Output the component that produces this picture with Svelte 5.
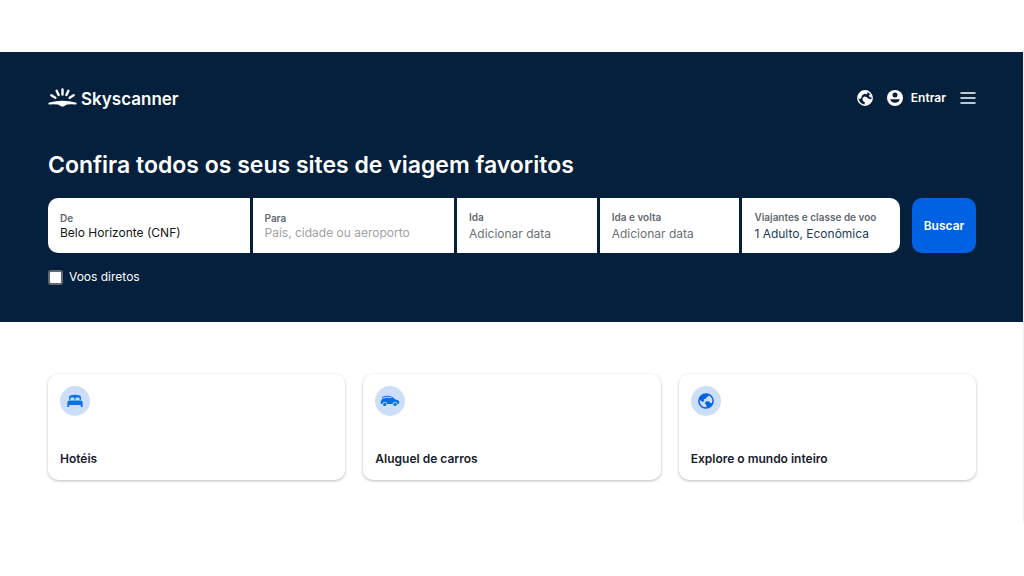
<script>
  let origin = $state('Belo Horizonte (CNF)');
  let destination = $state('');
  let direct = $state(false);

  const choices = [
    { label: 'Ida', value: 'Adicionar data' },
    { label: 'Ida e volta', value: 'Adicionar data' },
    { label: 'Viajantes e classe de voo', value: '1 Adulto, Econômica', filled: true },
  ];
  const cards = [
    { title: 'Hotéis', icon: 'bed' },
    { title: 'Aluguel de carros', icon: 'car' },
    { title: 'Explore o mundo inteiro', icon: 'globe' },
  ];
</script>

<div class="page">
  <header class="hero">
    <nav class="topbar">
      <a class="logo" href="#home">
        <svg width="29" height="22" viewBox="0 0 29 22" aria-hidden="true">
          <g stroke="#fff" stroke-width="2.400" stroke-linecap="round">
            <path d="M14.500 1.500v5M8.600 2.800l2 4.200M20.400 2.800l-2 4.200M3.300 7.200l4 2.600M25.700 7.200l-4 2.600" />
          </g>
          <path d="M1.200 14.600Q14.500 10.800 27.800 14.600C29.200 15 28.700 16.800 27.300 16.500Q23 15.800 19.300 16.600C17.300 17.200 16.500 18.700 14.500 18.700S11.700 17.200 9.700 16.600Q6 15.800 1.700 16.500C.3 16.800-.2 15 1.200 14.600Z" fill="#fff" />
        </svg>
        <span>Skyscanner</span>
      </a>
      <div class="actions">
        <button class="plain" aria-label="Idioma e moeda">
          <svg width="16" height="16" viewBox="0 0 16 16" aria-hidden="true">
            <circle cx="8" cy="8" r="7.200" fill="none" stroke="#fff" stroke-width="1.400" />
            <path d="M9.500 1.200C5 .2 1 3 .9 7.500L2.500 9.300 4 8.200l1.200-3 2.200-1.400 2.400.4 1-1.400z" fill="#fff" />
            <path d="M5.500 8.200l1.800-1.600 2.300.4 1.600 1.600 2.300.6 1.400.2-1.500 3.400-3.400 2.300-2.500-.3.400-2.400-2-1.600z" fill="#fff" />
            <path d="M11.800 4.600l2.400.6.600 2.600-2.200-.8z" fill="#fff" />
          </svg>
        </button>
        <button class="plain login">
          <svg width="16" height="16" viewBox="0 0 16 16" aria-hidden="true">
            <circle cx="8" cy="8" r="8" fill="#fff" />
            <circle cx="8" cy="5" r="2.500" fill="#05203c" />
            <path d="M3.200 9.300h9.600a4.900 4.300 0 0 1-9.600 0Z" fill="#05203c" />
          </svg>
          Entrar
        </button>
        <button class="plain" aria-label="Menu">
          <svg width="16" height="12" viewBox="0 0 16 12" aria-hidden="true">
            <path d="M1 1h14M1 6h14M1 11h14" stroke="#fff" stroke-width="1.500" stroke-linecap="round" />
          </svg>
        </button>
      </div>
    </nav>

    <h1>Confira todos os seus sites de viagem favoritos</h1>

    <form onsubmit={(e) => e.preventDefault()}>
      <div class="search">
        <div class="fields">
          <label class="field">
            <span class="caption">De</span>
            <input type="text" bind:value={origin} />
          </label>
          <label class="field">
            <span class="caption">Para</span>
            <input type="text" placeholder="País, cidade ou aeroporto" bind:value={destination} />
          </label>
          {#each choices as choice}
            <button type="button" class="field choice">
              <span class="caption">{choice.label}</span>
              <span class="value" class:filled={choice.filled}>{choice.value}</span>
            </button>
          {/each}
        </div>
        <button class="submit">Buscar</button>
      </div>
      <label class="direct">
        <input type="checkbox" bind:checked={direct} />
        Voos diretos
      </label>
    </form>
  </header>

  <main class="cards">
    {#each cards as card}
      <a class="card" href="#{card.icon}">
        <span class="badge">
          {#if card.icon === 'bed'}
            <svg width="16" height="16" viewBox="0 0 16 16" aria-hidden="true">
              <path d="M2 6.800V4.200Q2 2.600 4 2.200 8 1.400 12 2.200 14 2.600 14 4.200v2.600h-1.500V5.600q0-1-1-1H9.400q-.8 0-.8.800v1.400H7.400V5.400q0-.8-.8-.8H4.500q-1 0-1 1v1.200ZM.4 9.500Q.4 7.600 2.200 7.600h11.600q1.800 0 1.800 1.900V14h-1.800v-2H2.200v2H.4Z" fill="#0770e3" />
            </svg>
          {:else if card.icon === 'car'}
            <svg width="20" height="12" viewBox="0 0 20 12" aria-hidden="true">
              <path d="M2 2Q8-.6 12.300 1.900l3.200 2.500q3.300.3 3.700 2.100L19 9h-1.400a2.600 2.600 0 0 0-5.100 0H7.200a2.600 2.600 0 0 0-5.100 0H.8Q.4 6.500 1.700 4.800l.8-1Z" fill="#0770e3" />
              <path d="M2.800 3.300Q6.500 1.500 11.400 2.600" fill="none" stroke="#cddff8" stroke-width="1" />
              <circle cx="4.700" cy="9.400" r="1.700" fill="#0770e3" />
              <circle cx="15.100" cy="9.400" r="1.700" fill="#0770e3" />
            </svg>
          {:else}
            <svg width="16" height="16" viewBox="0 0 16 16" aria-hidden="true">
              <circle cx="8" cy="8" r="7.100" fill="none" stroke="#0062e3" stroke-width="1.500" />
              <path d="M10.500 1.200C6 .2 2 2 1 6.300L3 8l2.200 1 1-1.700L5.700 6l2.600-.2.300-1.800 1.800-.5zM8 8.200l3.200.2 1 1.500 1.800.2-1.500 3-3.600 2-.7-3.200-1.400-1.600z" fill="#0062e3" />
            </svg>
          {/if}
        </span>
        <span class="title">{card.title}</span>
      </a>
    {/each}
  </main>
</div>

<style>
  :global(body) {
    margin: 0;
    padding: 52px 0;
    background: #fff;
  }
  .page {
    font-family: Inter, 'Liberation Sans', sans-serif;
    font-size: 12px;
    line-height: 16px;
    color: #161616;
    border-right: 1px solid #f1f1f2;
  }
  .page * {
    box-sizing: border-box;
  }
  button,
  input {
    font: inherit;
    color: inherit;
    margin: 0;
    padding: 0;
    border: 0;
  }
  a {
    color: inherit;
    text-decoration: none;
  }
  svg {
    display: block;
    flex: none;
  }
  .hero {
    background: #05203c;
    color: #fff;
    padding: 32px 47px 37px 48px;
  }
  .topbar,
  .logo,
  .actions,
  .login {
    display: flex;
    align-items: center;
  }
  .topbar {
    justify-content: space-between;
    height: 28px;
  }
  .logo {
    gap: 4px;
    font-size: 17px;
    line-height: 24px;
    font-weight: 600;
    padding-top: 2px;
  }
  .actions {
    gap: 14px;
  }
  .plain {
    background: none;
  }
  .login {
    gap: 8px;
    font-weight: 600;
  }
  h1 {
    margin: 37px 0 17px;
    font-size: 23px;
    line-height: 32px;
    font-weight: 600;
  }
  .search {
    display: flex;
    gap: 12px;
  }
  .fields {
    flex: 1;
    display: grid;
    grid-template-columns: 202fr 202fr 140fr 140fr 158fr;
    gap: 3px;
    border-radius: 10px;
    overflow: hidden;
  }
  .field {
    display: flex;
    flex-direction: column;
    justify-content: center;
    min-width: 0;
    height: 55px;
    padding: 0 12px;
    background: #fff;
    text-align: left;
    white-space: nowrap;
  }
  .choice {
    gap: 2px;
  }
  .caption {
    font-size: 10px;
    line-height: 14px;
    font-weight: 600;
    color: #626971;
  }
  .field input {
    width: 100%;
    height: 16px;
    background: none;
    color: #161616;
    outline: 0;
  }
  .field input::placeholder {
    color: #a2a2a2;
    opacity: 1;
  }
  .value {
    color: #6b7075;
  }
  .value.filled {
    color: #243a55;
  }
  .submit {
    width: 64px;
    border-radius: 10px;
    background: #0062e3;
    color: #fff;
    font-weight: 600;
  }
  .direct {
    display: flex;
    align-items: center;
    width: fit-content;
    gap: 6px;
    margin-top: 16px;
  }
  .direct input {
    appearance: none;
    width: 15px;
    height: 15px;
    border: 2px solid #626971;
    border-radius: 3px;
    background: #fff;
  }
  .direct input:checked {
    background: #0062e3;
  }
  .cards {
    display: grid;
    grid-template-columns: repeat(3, 1fr);
    gap: 18px;
    padding: 52px 47px 44px 48px;
  }
  .card {
    display: flex;
    flex-direction: column;
    justify-content: space-between;
    align-items: flex-start;
    height: 106px;
    padding: 12px 12px 13px;
    border-radius: 10px;
    background: #fff;
    box-shadow: 0 1px 3px rgba(37, 32, 31, 0.3);
  }
  .badge {
    display: grid;
    place-items: center;
    width: 30px;
    height: 30px;
    border-radius: 50%;
    background: #cddff8;
  }
  .title {
    font-weight: 600;
    color: #161b2e;
  }
</style>
